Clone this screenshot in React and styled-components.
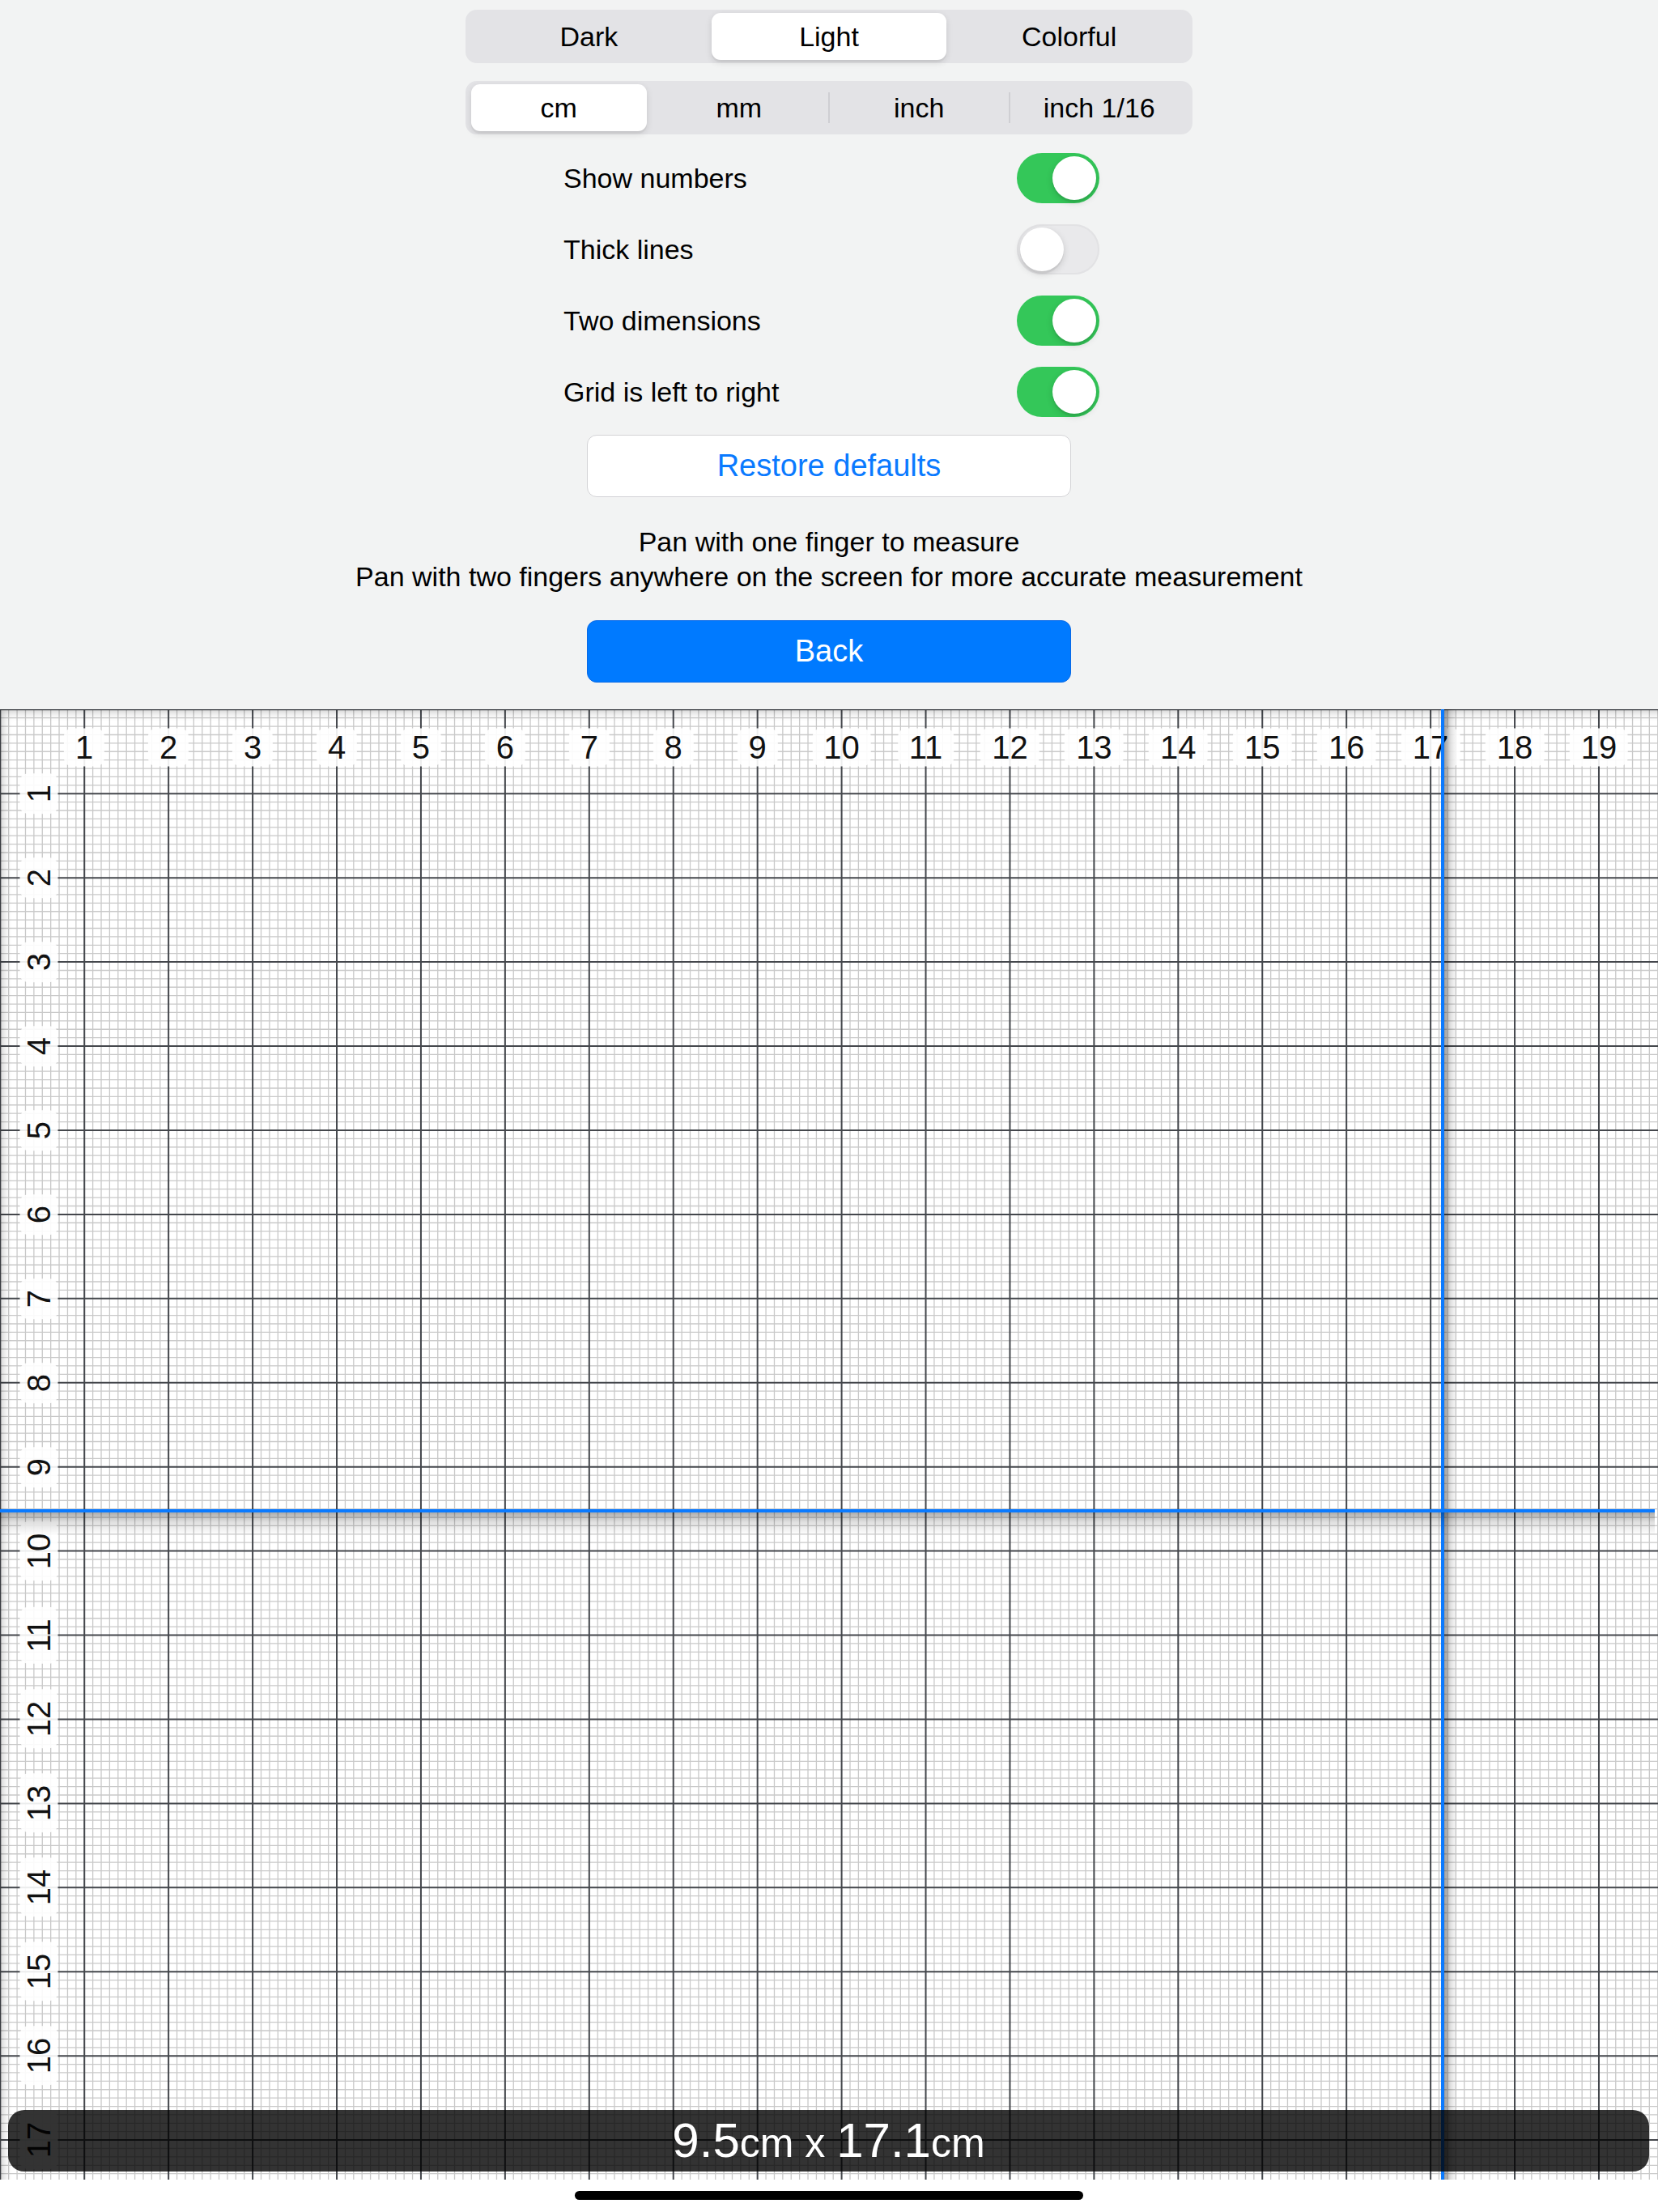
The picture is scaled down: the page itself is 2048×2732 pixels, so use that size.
import React, { useMemo } from 'react';
import styled, { createGlobalStyle } from 'styled-components';

const STEP = 103.93;
const MINOR = STEP / 10;
const GRID_W = 2048;
const GRID_H = 1816;

const GlobalStyle = createGlobalStyle`
  html, body { margin: 0; padding: 0; background: #ffffff; }
  body { font-family: "Liberation Sans", Arial, sans-serif; -webkit-font-smoothing: antialiased; }
  #root { width: 2048px; }
  * { box-sizing: border-box; }
`;

const Page = styled.div`
  width: 2048px;
  display: flex;
  flex-direction: column;
`;

const Settings = styled.section`
  height: 876px;
  background: #f2f3f3;
  display: flex;
  flex-direction: column;
  align-items: center;
  padding-top: 12px;
`;

const SegmentBar = styled.div`
  width: 898px;
  height: 66px;
  margin-top: ${p => p.$mt || 0}px;
  background: #e3e3e6;
  border-radius: 14px;
  padding: 4px;
  display: grid;
  grid-template-columns: repeat(${p => p.$count}, 1fr);
`;

const Segment = styled.div`
  position: relative;
  display: flex;
  align-items: center;
  justify-content: center;
  font-size: 34px;
  color: #000;
  margin: 0 ${p => (p.$active ? 3 : 0)}px;
  border-radius: 11px;
  background: ${p => (p.$active ? '#ffffff' : 'transparent')};
  box-shadow: ${p => (p.$active ? '0 3px 8px rgba(0,0,0,0.12), 0 3px 1px rgba(0,0,0,0.04)' : 'none')};

  &::before {
    content: '';
    display: ${p => (p.$divider ? 'block' : 'none')};
    position: absolute;
    left: -1px;
    top: 10px;
    bottom: 10px;
    width: 2px;
    background: #cfcfd3;
  }
`;

const ToggleList = styled.div`
  align-self: flex-start;
  margin-left: 696px;
  margin-top: 23px;
  width: 662px;
  display: flex;
  flex-direction: column;
  gap: 26px;
`;

const ToggleRow = styled.div`
  height: 62px;
  display: flex;
  align-items: center;
  justify-content: space-between;
`;

const ToggleLabel = styled.span`
  font-size: 34px;
  color: #000;
`;

const Switch = styled.div`
  width: 102px;
  height: 62px;
  border-radius: 31px;
  padding: 4px;
  display: flex;
  justify-content: ${p => (p.$on ? 'flex-end' : 'flex-start')};
  background: ${p => (p.$on ? '#34c759' : '#e9e9eb')};
  box-shadow: ${p => (p.$on ? 'none' : 'inset 0 0 0 2px #e2e2e4')};
`;

const Knob = styled.div`
  width: 54px;
  height: 54px;
  border-radius: 50%;
  background: #ffffff;
  box-shadow: 0 3px 8px rgba(0,0,0,0.15), 0 3px 1px rgba(0,0,0,0.06);
`;

const ActionButton = styled.button`
  width: 598px;
  height: 77px;
  margin-top: ${p => p.$mt}px;
  border-radius: 12px;
  font-family: "Liberation Sans", Arial, sans-serif;
  font-size: 38px;
  display: flex;
  align-items: center;
  justify-content: center;
  padding: 0;
  background: ${p => (p.$primary ? '#007aff' : '#ffffff')};
  color: ${p => (p.$primary ? '#ffffff' : '#0a7aff')};
  border: 1.5px solid ${p => (p.$primary ? '#0a6ae6' : '#d3d3d6')};
`;

const Hint = styled.p`
  margin: 34px 0 0;
  font-size: 34px;
  line-height: 43px;
  text-align: center;
  color: #000;
`;

const GridArea = styled.div`
  position: relative;
  width: ${GRID_W}px;
  height: ${GRID_H}px;
  overflow: hidden;
  background: #ffffff;
`;

const GridSvg = styled.svg`
  display: block;
`;

const EdgeShade = styled.div`
  position: absolute;
  inset: 0;
  pointer-events: none;
  box-shadow: inset 9px 9px 14px -8px rgba(0,0,0,0.3);
`;

const AxisLabel = styled.div`
  position: absolute;
  transform: translate(-50%, -50%) ${p => (p.$vertical ? 'rotate(-90deg)' : '')};
  height: 47px;
  line-height: 47px;
  padding: 0 14px;
  font-size: 40px;
  color: #111;
  white-space: nowrap;
  background: rgba(255,255,255,0.9);
  border-radius: 10px;
`;

const CrossV = styled.div`
  position: absolute;
  top: 0;
  bottom: 0;
  left: 1780px;
  width: 20px;
  background: linear-gradient(to right, #0a7aff 0, #0a7aff 4px, rgba(0,0,0,0.38) 4px, rgba(0,0,0,0.12) 12px, rgba(0,0,0,0) 20px);
`;

const CrossH = styled.div`
  position: absolute;
  left: 0;
  width: 2044px;
  top: 988px;
  height: 32px;
  background: linear-gradient(to bottom, #0a7aff 0, #0a7aff 4px, rgba(0,0,0,0.32) 4px, rgba(0,0,0,0.12) 16px, rgba(0,0,0,0) 32px);
`;

const MeasureBar = styled.div`
  position: absolute;
  left: 10px;
  right: 11px;
  bottom: 10px;
  height: 76px;
  border-radius: 20px;
  background: rgba(0,0,0,0.8);
  display: flex;
  align-items: flex-start;
  justify-content: center;
  color: #ffffff;
  white-space: pre;
`;

const MeasureText = styled.div`
  font-size: 60px;
  line-height: 76px;
  height: 76px;
`;

const Num = styled.span`
  font-size: 60px;
`;

const Unit = styled.span`
  font-size: 50px;
`;

const HomeArea = styled.div`
  height: 40px;
  background: #ffffff;
  display: flex;
  justify-content: center;
  padding-top: 14px;
`;

const HomeIndicator = styled.div`
  width: 628px;
  height: 11px;
  border-radius: 6px;
  background: #000000;
`;

function GridLines() {
  const { minorV, minorH, majorV, majorH } = useMemo(() => {
    const mv = [], mh = [], jv = [], jh = [];
    const nv = Math.floor(GRID_W / MINOR) + 1;
    const nh = Math.floor(GRID_H / MINOR) + 1;
    for (let i = 0; i < nv; i++) {
      const x = +(i * MINOR + 0.3).toFixed(2);
      (i % 10 === 0 ? jv : mv).push(x);
    }
    for (let i = 0; i < nh; i++) {
      const y = +(i * MINOR + 0.3).toFixed(2);
      (i % 10 === 0 ? jh : mh).push(y);
    }
    return { minorV: mv, minorH: mh, majorV: jv, majorH: jh };
  }, []);
  return (
    <GridSvg width={GRID_W} height={GRID_H} viewBox={`0 0 ${GRID_W} ${GRID_H}`}>
      <g stroke="#c9c9c9" strokeWidth="1.3">
        {minorV.map(x => <line key={'v' + x} x1={x} y1={0} x2={x} y2={GRID_H} />)}
        {minorH.map(y => <line key={'h' + y} x1={0} y1={y} x2={GRID_W} y2={y} />)}
      </g>
      <g stroke="#44474c" strokeWidth="2">
        {majorV.map(x => <line key={'V' + x} x1={x} y1={0} x2={x} y2={GRID_H} />)}
        {majorH.map(y => <line key={'H' + y} x1={0} y1={y} x2={GRID_W} y2={y} />)}
      </g>
    </GridSvg>
  );
}

const themes = ['Dark', 'Light', 'Colorful'];
const units = ['cm', 'mm', 'inch', 'inch 1/16'];
const toggles = [
  ['Show numbers', true],
  ['Thick lines', false],
  ['Two dimensions', true],
  ['Grid is left to right', true],
];

function SegmentedControl({ items, active, mt }) {
  return (
    <SegmentBar $count={items.length} $mt={mt}>
      {items.map((it, i) => (
        <Segment
          key={it}
          $active={i === active}
          $divider={i > 0 && i !== active && i - 1 !== active}
        >
          {it}
        </Segment>
      ))}
    </SegmentBar>
  );
}

export default function App() {
  const topNums = Array.from({ length: 19 }, (_, i) => i + 1);
  const leftNums = Array.from({ length: 17 }, (_, i) => i + 1);
  return (
    <Page>
      <GlobalStyle />
      <Settings>
        <SegmentedControl items={themes} active={1} mt={0} />
        <SegmentedControl items={units} active={0} mt={22} />
        <ToggleList>
          {toggles.map(([label, on]) => (
            <ToggleRow key={label}>
              <ToggleLabel>{label}</ToggleLabel>
              <Switch $on={on}><Knob /></Switch>
            </ToggleRow>
          ))}
        </ToggleList>
        <ActionButton $mt={22}>Restore defaults</ActionButton>
        <Hint>
          Pan with one finger to measure
          <br />
          Pan with two fingers anywhere on the screen for more accurate measurement
        </Hint>
        <ActionButton $mt={32} $primary>Back</ActionButton>
      </Settings>
      <GridArea>
        <GridLines />
        <EdgeShade />
        {topNums.map(n => (
          <AxisLabel key={'t' + n} style={{ left: n * STEP + 0.3, top: 47 }}>{n}</AxisLabel>
        ))}
        {leftNums.map(n => (
          <AxisLabel key={'l' + n} $vertical style={{ left: 48, top: n * STEP + 0.3 }}>{n}</AxisLabel>
        ))}
        <CrossV />
        <CrossH />
        <MeasureBar>
          <MeasureText>
            <Num>9.5</Num><Unit>cm x </Unit><Num>17.1</Num><Unit>cm</Unit>
          </MeasureText>
        </MeasureBar>
      </GridArea>
      <HomeArea>
        <HomeIndicator />
      </HomeArea>
    </Page>
  );
}
